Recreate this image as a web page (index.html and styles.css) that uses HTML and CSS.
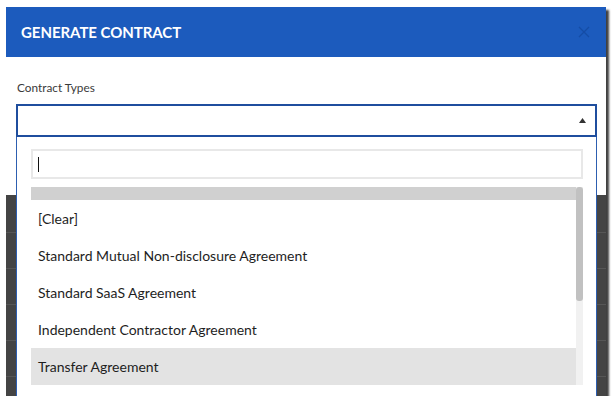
FILE: index.html
```html
<!DOCTYPE html>
<html>
<head>
<meta charset="utf-8">
<link rel="stylesheet" href="styles.css">
</head>
<body>
<div class="shot">
  <div class="modal">
    <header class="modal-head">
      <h2 class="modal-title">GENERATE CONTRACT</h2>
      <svg class="close" width="12" height="12" viewBox="0 0 12 12"><path d="M1 1L11 11M11 1L1 11" stroke="#1449a0" stroke-width="1.2" fill="none"/></svg>
    </header>
    <div class="modal-body">
      <div class="field-label">Contract Types</div>
      <div class="select-wrap">
        <div class="select">
          <svg class="caret" width="7" height="5" viewBox="0 0 7 5"><path d="M0 5L3.5 0L7 5Z" fill="#333"/></svg>
        </div>
        <div class="dropdown">
          <div class="search"><span class="cursor"></span></div>
          <div class="list">
            <div class="items">
              <div class="item partial"></div>
              <div class="item">[Clear]</div>
              <div class="item">Standard Mutual Non-disclosure Agreement</div>
              <div class="item">Standard SaaS Agreement</div>
              <div class="item">Independent Contractor Agreement</div>
              <div class="item active">Transfer Agreement</div>
            </div>
            <div class="scrollbar"><div class="thumb"></div></div>
          </div>
        </div>
      </div>
    </div>
  </div>
  <div class="backdrop"></div>
</div>
</body>
</html>
```

FILE: styles.css
```css
html, body {
  margin: 0;
  padding: 0;
  background: #fff;
  font-family: Lato, "Open Sans", Arial, sans-serif;
}
.shot {
  margin: 7px 0 0 6px;
  width: 600px;
  height: 389px;
  display: flex;
  flex-direction: column;
  overflow: hidden;
  box-shadow: 3px 3px 2px rgba(0, 0, 0, 0.75);
  position: relative;
}
.modal {
  height: 188px;
  background: #fff;
  display: flex;
  flex-direction: column;
  flex: none;
}
.modal-head {
  height: 50px;
  background: #1c5bbd;
  display: flex;
  align-items: center;
  justify-content: space-between;
  padding: 0 16px 0 15px;
  flex: none;
}
.modal-title {
  margin: 0;
  color: #fff;
  font-size: 15px;
  font-weight: 700;
  letter-spacing: -0.05px;
}
.close {
  opacity: 0.8;
}
.modal-body {
  padding: 24px 9px 0 10px;
}
.field-label {
  font-size: 11.8px;
  color: #3a3a3a;
  line-height: 14px;
  margin-left: 1px;
  margin-bottom: 9px;
}
.select-wrap {
  position: relative;
}
.select {
  height: 29px;
  border: 2px solid #1f4e9e;
  display: flex;
  align-items: center;
  justify-content: flex-end;
  padding-right: 9px;
  background: #fff;
}
.dropdown {
  position: absolute;
  left: 0;
  right: 0;
  top: 100%;
  height: 270px;
  background: #fff;
  border-left: 1px solid #2d5eb0;
  border-right: 1px solid #2d5eb0;
  padding: 12px 13px 0 14px;
  box-sizing: border-box;
  z-index: 2;
}
.search {
  height: 30px;
  border: 2px solid #e8e8e8;
  box-sizing: border-box;
  display: flex;
  align-items: center;
  padding-left: 5px;
}
.cursor {
  display: block;
  width: 1px;
  height: 15px;
  background: #111;
}
.list {
  margin-top: 8px;
  display: flex;
  height: 198px;
}
.items {
  flex: 1;
  display: flex;
  flex-direction: column;
}
.item {
  height: 37px;
  flex: none;
  display: flex;
  align-items: center;
  padding-left: 7px;
  font-size: 14px;
  color: #1e1e1e;
}
.item.partial {
  height: 13px;
  background: #d0d0d0;
}
.item.active {
  background: #e3e3e3;
}
.scrollbar {
  width: 7px;
  background: #f1f1f1;
  flex: none;
}
.thumb {
  height: 114px;
  background: #c1c1c1;
  border-radius: 3px;
}
.backdrop {
  flex: 1;
  background-color: #444;
  background-image: repeating-linear-gradient(to bottom, transparent 0, transparent 35px, #565656 35px, #565656 36px);
  background-position: 0 2px;
}
```
